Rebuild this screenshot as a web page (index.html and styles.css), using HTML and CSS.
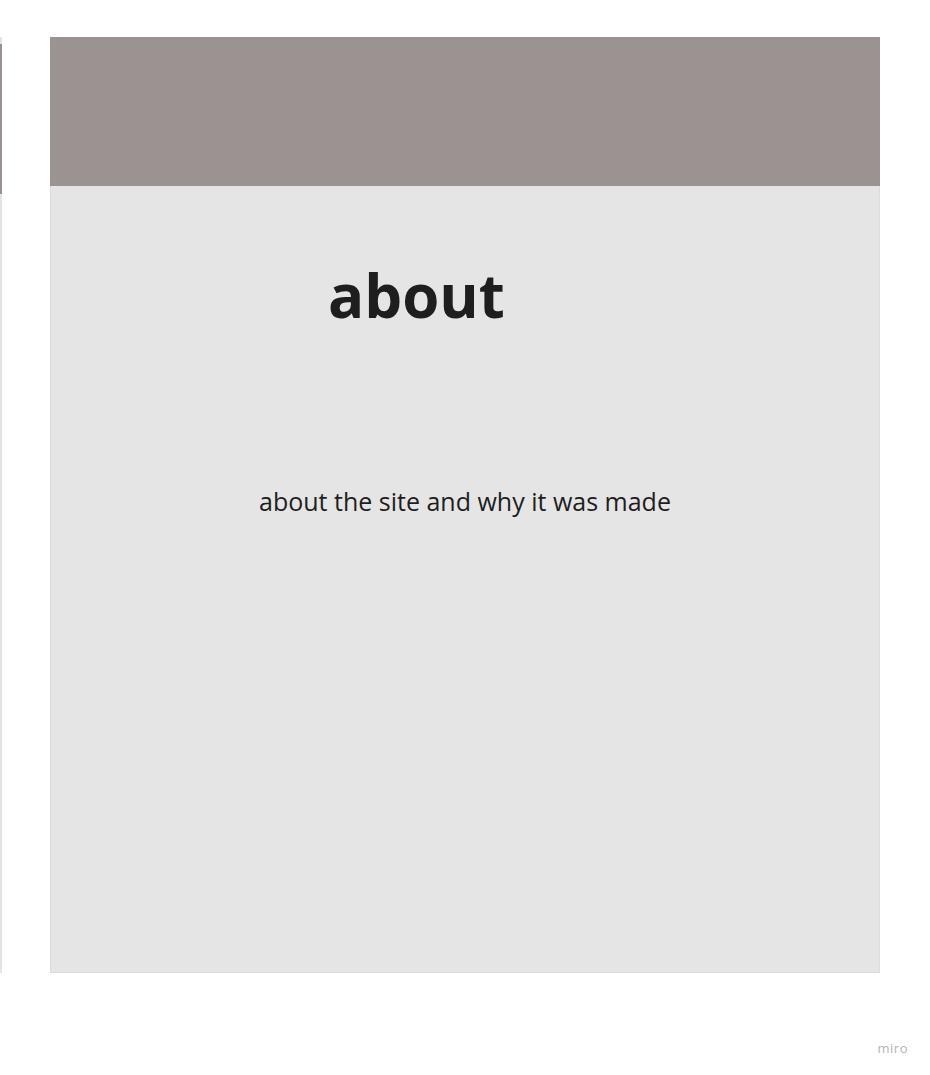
FILE: index.html
```html
<!DOCTYPE html>
<html>
<head>
<meta charset="utf-8">
<link rel="stylesheet" href="styles.css">
</head>
<body>
<div class="stage">
  <div class="side"><div class="side-mark"></div></div>
  <div class="card">
    <div class="card-head"></div>
    <div class="card-body">
      <h1 class="title">about</h1>
      <p class="sub">about the site and why it was made</p>
    </div>
  </div>
</div>
<div class="brand">miro</div>
</body>
</html>
```
FILE: styles.css
```css
html, body { margin: 0; padding: 0; background: #ffffff; }
body { width: 930px; height: 1075px; overflow: hidden; font-family: "Open Sans", sans-serif; position: relative; }
.stage { display: flex; align-items: flex-start; padding-top: 37px; }
.side { width: 2px; height: 936px; background: #e4e4e4; padding-top: 7px; box-sizing: border-box; }
.side-mark { width: 2px; height: 150px; background: #9a9292; }
.card { margin-left: 48px; width: 830px; display: flex; flex-direction: column; }
.card-head { height: 149px; background: #9b9292; }
.card-body { height: 787px; background: #e5e5e5; box-sizing: border-box; border: 1px solid #dcdcdc; border-top: none; padding-top: 73px; }
.title { margin: 0 0 0 277px; font-size: 60px; font-weight: 700; line-height: 72px; color: #1e1e1e; }
.sub { margin: 155px 0 0; text-align: center; font-size: 25px; line-height: 30px; color: #1e1e1e; }
.brand { position: absolute; right: 22px; top: 1039px; font-size: 13px; color: #b4b4b4; letter-spacing: 0.5px; }
```
